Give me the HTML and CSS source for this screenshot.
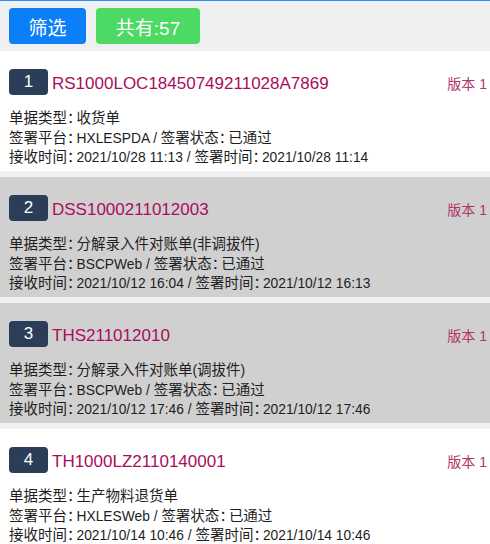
FILE: index.html
```html
<!DOCTYPE html>
<html lang="zh">
<head>
<meta charset="utf-8">
<link rel="stylesheet" href="styles.css">
</head>
<body>
<div class="topbar">
  <button class="btn btn-filter">筛选</button>
  <button class="btn btn-count">共有:57</button>
</div>
<div class="list">
  <div class="card">
    <div class="head">
      <span class="badge">1</span>
      <span class="code">RS1000LOC18450749211028A7869</span>
      <span class="ver">版本 1</span>
    </div>
    <div class="line"><span class="h">单据类型</span><span class="c">：</span><span class="h">收货单</span></div>
    <div class="line"><span class="h">签署平台</span><span class="c">：</span>HXLESPDA / <span class="h">签署状态</span><span class="c">：</span><span class="h">已通过</span></div>
    <div class="line"><span class="h">接收时间</span><span class="c">：</span>2021/10/28 11:13 / <span class="h">签署时间</span><span class="c">：</span>2021/10/28 11:14</div>
  </div>
  <div class="card gray">
    <div class="head">
      <span class="badge">2</span>
      <span class="code">DSS1000211012003</span>
      <span class="ver">版本 1</span>
    </div>
    <div class="line"><span class="h">单据类型</span><span class="c">：</span><span class="h">分解录入件对账单</span>(<span class="h">非调拔件</span>)</div>
    <div class="line"><span class="h">签署平台</span><span class="c">：</span>BSCPWeb / <span class="h">签署状态</span><span class="c">：</span><span class="h">已通过</span></div>
    <div class="line"><span class="h">接收时间</span><span class="c">：</span>2021/10/12 16:04 / <span class="h">签署时间</span><span class="c">：</span>2021/10/12 16:13</div>
  </div>
  <div class="card gray">
    <div class="head">
      <span class="badge">3</span>
      <span class="code">THS211012010</span>
      <span class="ver">版本 1</span>
    </div>
    <div class="line"><span class="h">单据类型</span><span class="c">：</span><span class="h">分解录入件对账单</span>(<span class="h">调拔件</span>)</div>
    <div class="line"><span class="h">签署平台</span><span class="c">：</span>BSCPWeb / <span class="h">签署状态</span><span class="c">：</span><span class="h">已通过</span></div>
    <div class="line"><span class="h">接收时间</span><span class="c">：</span>2021/10/12 17:46 / <span class="h">签署时间</span><span class="c">：</span>2021/10/12 17:46</div>
  </div>
  <div class="card">
    <div class="head">
      <span class="badge">4</span>
      <span class="code">TH1000LZ2110140001</span>
      <span class="ver">版本 1</span>
    </div>
    <div class="line"><span class="h">单据类型</span><span class="c">：</span><span class="h">生产物料退货单</span></div>
    <div class="line"><span class="h">签署平台</span><span class="c">：</span>HXLESWeb / <span class="h">签署状态</span><span class="c">：</span><span class="h">已通过</span></div>
    <div class="line"><span class="h">接收时间</span><span class="c">：</span>2021/10/14 10:46 / <span class="h">签署时间</span><span class="c">：</span>2021/10/14 10:46</div>
  </div>
</div>
</body>
</html>
```
FILE: styles.css
```css
html, body {
  margin: 0;
  padding: 0;
}
body {
  background: #eff0f2;
  font-family: "Liberation Sans", "Noto Sans CJK SC", sans-serif;
  color: #1e1e1e;
  border-top: 1px solid #2b8ef5;
  overflow: hidden;
}
.topbar {
  display: flex;
  gap: 10px;
  padding: 7px 9px 7px 9px;
}
.btn {
  border: none;
  border-radius: 4px;
  color: #fff;
  font-family: "Liberation Sans", "Noto Sans CJK SC", sans-serif;
  font-size: 19px;
  height: 36px;
  padding: 0;
  display: flex;
  align-items: center;
  justify-content: center;
}
.btn-filter {
  background: #0a7ff7;
  width: 77px;
}
.btn-count {
  background: #4cd964;
  width: 104px;
}
.list {
  display: flex;
  flex-direction: column;
  gap: 6px;
}
.card {
  background: #fff;
  height: 120px;
  box-sizing: border-box;
  padding: 18px 3px 0 9px;
}
.card.gray {
  background: #d0d0d0;
}
.head {
  display: flex;
  align-items: center;
  height: 26px;
  margin-bottom: 14px;
}
.badge {
  width: 39px;
  height: 26px;
  border-radius: 4px;
  background: #2c3d58;
  color: #fff;
  font-size: 17px;
  display: flex;
  align-items: center;
  justify-content: center;
  margin-right: 4px;
  flex: none;
}
.code {
  color: #a80e5b;
  font-size: 17px;
  flex: 1;
  padding-top: 3px;
}
.ver {
  color: #b0346c;
  font-size: 14px;
  padding-top: 2px;
}
.line {
  font-size: 13.8px;
  line-height: 19.5px;
  white-space: nowrap;
}
.h {
  font-size: 14.5px;
}
.c {
  font-size: 14.5px;
  letter-spacing: -5px;
}
```
